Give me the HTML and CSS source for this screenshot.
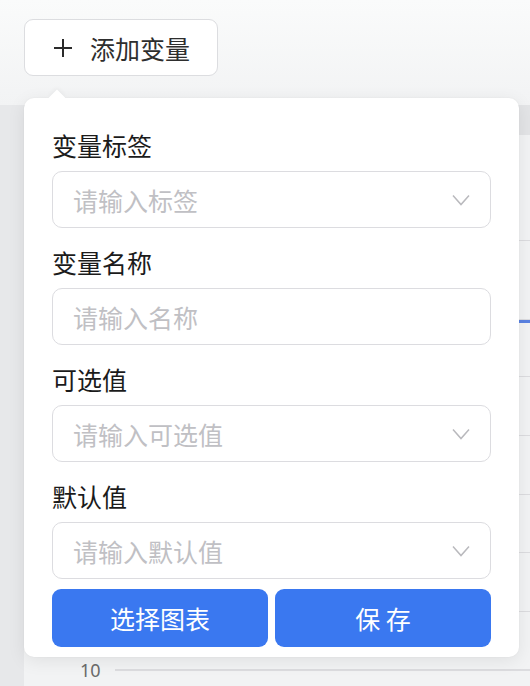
FILE: index.html
```html
<!DOCTYPE html>
<html lang="zh-CN">
<head>
<meta charset="utf-8">
<title>添加变量</title>
<link rel="stylesheet" href="styles.css">
</head>
<body>
<div class="page">
  <header class="topbar">
    <button class="add-btn" type="button">
      <svg class="plus" width="20" height="20" viewBox="0 0 20 20"><path d="M10 1v18M1 10h18" stroke="#2b2b2b" stroke-width="2" fill="none"/></svg>
      <span>添加变量</span>
    </button>
  </header>
  <div class="main">
    <aside class="side"></aside>
    <section class="chart">
      <div class="thead"></div>
      <div class="band"></div>
      <div class="row r79"><span class="axis"></span><span class="line"></span></div>
      <div class="row r57 series"><span class="axis"></span><span class="line"></span></div>
      <div class="row r59"><span class="axis"></span><span class="line"></span></div>
      <div class="row r59"><span class="axis"></span><span class="line"></span></div>
      <div class="row r58"><span class="axis"></span><span class="line"></span></div>
      <div class="row r59"><span class="axis"></span><span class="line"></span></div>
      <div class="row r58"><span class="axis"></span><span class="line"></span></div>
      <div class="row last"><span class="axis">10</span><span class="line"></span></div>
    </section>
  </div>

  <div class="popover">
    <span class="arrow"></span>
    <div class="field">
      <label class="label">变量标签</label>
      <div class="box">
        <input class="input" placeholder="请输入标签">
        <svg class="chev" width="18" height="12" viewBox="0 0 18 12"><path d="M1 1.5l8 9 8-9" stroke="#b9b9bd" stroke-width="1.5" fill="none"/></svg>
      </div>
    </div>
    <div class="field">
      <label class="label">变量名称</label>
      <div class="box">
        <input class="input" placeholder="请输入名称">
      </div>
    </div>
    <div class="field">
      <label class="label">可选值</label>
      <div class="box">
        <input class="input" placeholder="请输入可选值">
        <svg class="chev" width="18" height="12" viewBox="0 0 18 12"><path d="M1 1.5l8 9 8-9" stroke="#b9b9bd" stroke-width="1.5" fill="none"/></svg>
      </div>
    </div>
    <div class="field">
      <label class="label">默认值</label>
      <div class="box">
        <input class="input" placeholder="请输入默认值">
        <svg class="chev" width="18" height="12" viewBox="0 0 18 12"><path d="M1 1.5l8 9 8-9" stroke="#b9b9bd" stroke-width="1.5" fill="none"/></svg>
      </div>
    </div>
    <div class="actions">
      <button class="primary" type="button">选择图表</button>
      <button class="primary" type="button">保 存</button>
    </div>
  </div>
</div>
</body>
</html>
```

FILE: styles.css
```css
* { box-sizing: border-box; }
html, body { margin: 0; padding: 0; }
body {
  font-family: "Noto Sans CJK SC", "Noto Sans", sans-serif;
  background: #f4f5f6;
  width: 530px;
  height: 686px;
  overflow: hidden;
}
.page {
  position: relative;
  width: 530px;
  height: 686px;
  display: flex;
  flex-direction: column;
}
.topbar {
  height: 105px;
  padding: 19px 24px 0;
  background: linear-gradient(#fafbfb, #f2f3f4);
  flex: none;
}
.add-btn {
  display: flex;
  align-items: center;
  height: 57px;
  width: 194px;
  padding: 0 0 0 28px;
  border: 1px solid #dcdde0;
  border-radius: 9px;
  background: #fff;
  font-family: inherit;
  font-size: 25px;
  color: #2e2e2e;
  gap: 17px;
  cursor: pointer;
}
.plus { flex: none; }
.main {
  flex: 1;
  display: flex;
}
.side {
  width: 24px;
  background: #e7e8ea;
  flex: none;
}
.chart {
  flex: 1;
  display: flex;
  flex-direction: column;
  background: #f2f3f4;
}
.thead {
  height: 30px;
  background: #e3e4e6;
}
.band {
  height: 106px;
  border-bottom: 1px solid #dcdcdf;
}
.row {
  display: flex;
  align-items: flex-end;
}
.r79 { height: 79px; }
.r57 { height: 57px; }
.r58 { height: 58px; }
.r59 { height: 59px; }
.row .axis {
  width: 91px;
  flex: none;
}
.row .line {
  flex: 1;
  border-bottom: 1px solid #dcdcdf;
}
.series { border-top: 3px solid #5a82e2; }
.row.last {
  align-items: center;
  height: 30px;
  margin-top: -15px;
}
.row.last .axis {
  font-family: "Noto Sans", sans-serif;
  font-size: 18px;
  color: #6b6b6b;
  text-align: left;
  padding-left: 56px;
  line-height: 1;
}
.popover {
  position: absolute;
  left: 24px;
  top: 98px;
  width: 495px;
  background: #fff;
  border-radius: 10px;
  box-shadow: 0 4px 18px rgba(0, 0, 0, 0.08), 0 0 2px rgba(0, 0, 0, 0.05);
  padding: 30px 28px 10px;
  display: flex;
  flex-direction: column;
  gap: 17px;
}
.arrow {
  position: absolute;
  left: 27px;
  top: -6px;
  width: 12px;
  height: 12px;
  background: #fff;
  transform: rotate(45deg);
  box-shadow: -2px -2px 4px rgba(0, 0, 0, 0.03);
}
.field {
  display: flex;
  flex-direction: column;
  gap: 9px;
}
.label {
  font-size: 25px;
  line-height: 34px;
  height: 34px;
  color: #1b1b1b;
}
.box {
  display: flex;
  align-items: center;
  height: 57px;
  border: 1px solid #dcdce0;
  border-radius: 10px;
  padding: 0 20px 0 20px;
}
.input {
  flex: 1;
  min-width: 0;
  border: 0;
  outline: none;
  background: transparent;
  font-family: inherit;
  font-size: 25px;
  color: #333;
  padding: 0;
}
.input::placeholder { color: #c0c0c4; }
.chev { flex: none; }
.actions {
  display: grid;
  grid-template-columns: 1fr 1fr;
  gap: 7px;
  margin-top: -7px;
}
.primary {
  height: 58px;
  border: 0;
  border-radius: 9px;
  background: #3a78f0;
  color: #fff;
  font-family: inherit;
  font-size: 25px;
  cursor: pointer;
}
```
